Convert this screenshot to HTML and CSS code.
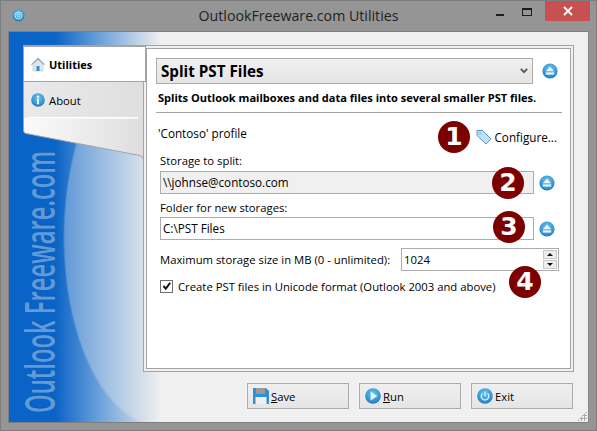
FILE: index.html
```html
<!DOCTYPE html>
<html lang="en">
<head>
<meta charset="utf-8">
<title>OutlookFreeware.com Utilities</title>
<link rel="stylesheet" href="styles.css">
</head>
<body>
<svg class="defs" width="0" height="0" aria-hidden="true">
  <defs>
    <radialGradient id="blue" cx="50%" cy="35%" r="70%">
      <stop offset="0" stop-color="#6cc4ee"/>
      <stop offset="0.6" stop-color="#3a9ad8"/>
      <stop offset="1" stop-color="#1a6fb8"/>
    </radialGradient>
    <symbol id="eject" viewBox="0 0 16 16">
      <circle cx="8" cy="8" r="7.6" fill="url(#blue)"/>
      <path d="M8 3.6 12.2 8.2H3.8Z" fill="#e8f4fb"/>
      <rect x="3.8" y="9.4" width="8.4" height="2.2" fill="#e8f4fb"/>
    </symbol>
  </defs>
</svg>
<div class="window">
  <header class="titlebar">
    <svg class="app-icon" viewBox="0 0 14 14"><circle cx="7" cy="7" r="6.5" fill="url(#blue)"/><circle cx="7" cy="7" r="3.8" fill="none" stroke="#cfe9f8" stroke-width="1"/><circle cx="7" cy="7" r="1.6" fill="none" stroke="#cfe9f8" stroke-width="1"/></svg>
    <h1 class="title">OutlookFreeware.com Utilities</h1>
    <div class="controls">
      <span class="min"></span>
      <span class="max"></span>
      <span class="close"><svg viewBox="0 0 10 10" width="10" height="10"><path d="M1 1 9 9M9 1 1 9" stroke="#fff" stroke-width="1.8"/></svg></span>
    </div>
  </header>
  <div class="client">
    <div class="watermark">Outlook Freeware.com</div>
    <div class="main">
      <nav class="nav">
        <svg class="nav-shape" viewBox="0 0 122 116" width="122" height="116">
          <defs><linearGradient id="pane" x1="0" x2="1" y1="0" y2="0"><stop offset="0" stop-color="#fbfbfb"/><stop offset="1" stop-color="#dedede"/></linearGradient></defs>
          <path d="M0.5 0.5V85.5Q0.5 88 3 88.5L117 110.5Q120.5 111.5 120.5 115V0.5Z" fill="url(#pane)" stroke="#a4a4a4"/>
        </svg>
        <a class="tab tab-active">
          <svg class="tab-icon" viewBox="0 0 16 16"><path d="M1 8.5 8 1.5l7 7-1 .6L8 3.4 2 9.1Z" fill="#8fa6b8"/><path d="M3 8.5 8 4l5 4.5V15H3Z" fill="#dfe7ee" stroke="#a8b4bf" stroke-width=".5"/><rect x="6.5" y="10" width="3" height="5" fill="#2f8fd6"/></svg>
          <span>Utilities</span>
        </a>
        <a class="tab tab-plain">
          <svg class="tab-icon" viewBox="0 0 16 16"><circle cx="8" cy="8" r="6.8" fill="url(#blue)"/><circle cx="8" cy="4.7" r="1.2" fill="#fff"/><rect x="7" y="6.8" width="2" height="5.4" fill="#fff"/></svg>
          <span>About</span>
        </a>
        <div class="nav-sep"></div>
      </nav>
      <section class="panel">
        <div class="panel-inner">
          <div class="row combo-row">
            <div class="combo">
              <span>Split PST Files</span>
              <svg class="chevron" viewBox="0 0 8 6" width="8" height="6"><path d="M.8 .8 4 4.2 7.2 .8" fill="none" stroke="#555" stroke-width="1.7"/></svg>
            </div>
            <svg class="eject"><use href="#eject"/></svg>
          </div>
          <p class="desc">Splits Outlook mailboxes and data files into several smaller PST files.</p>
          <div class="rule"></div>
          <div class="profile-row">
            <span>'Contoso' profile</span>
            <a class="configure">
              <svg class="tag" viewBox="0 0 16 16"><path d="M1 1.5H6.5L15 10 10 15 1 6.5Z" fill="#bfe0f6" stroke="#4f9ad2"/><circle cx="3.8" cy="4.2" r="1.1" fill="#fff" stroke="#4f9ad2" stroke-width=".6"/></svg>
              Configure...
            </a>
          </div>
          <label class="field-label first">Storage to split:</label>
          <div class="row field-row">
            <div class="input readonly">\\johnse@contoso.com</div>
            <svg class="eject"><use href="#eject"/></svg>
          </div>
          <label class="field-label second">Folder for new storages:</label>
          <div class="row field-row tight">
            <div class="input">C:\PST Files</div>
            <svg class="eject"><use href="#eject"/></svg>
          </div>
          <div class="size-row">
            <span class="size-label">Maximum storage size in MB (0 - unlimited):</span>
            <div class="spin">
              <span>1024</span>
              <div class="spin-btns">
                <i class="up"></i>
                <i class="down"></i>
              </div>
            </div>
          </div>
          <div class="check-row">
            <span class="checkbox"><svg viewBox="0 0 12 12" width="12" height="12"><path d="M2.5 6 5 8.8 9.6 2.6" fill="none" stroke="#111" stroke-width="2"/></svg></span>
            <span>Create PST files in Unicode format (Outlook 2003 and above)</span>
          </div>
          <span class="badge b1">1</span>
          <span class="badge b2">2</span>
          <span class="badge b3">3</span>
          <span class="badge b4">4</span>
        </div>
      </section>
    </div>
    <footer class="footer">
      <button class="btn">
        <svg viewBox="0 0 16 16"><path d="M0 0H13L16 3V16H0Z" fill="#2f8fd6"/><rect x="3" y="0" width="9" height="6" fill="#9a9a9a"/><rect x="2.5" y="9" width="11" height="7" fill="#eef1f3"/></svg>
        <span><u>S</u>ave</span>
      </button>
      <button class="btn">
        <svg viewBox="0 0 16 16"><circle cx="8" cy="8" r="7.8" fill="url(#blue)"/><path d="M5.6 3.6 12.4 8 5.6 12.4Z" fill="#e8f4fb"/></svg>
        <span><u>R</u>un</span>
      </button>
      <button class="btn">
        <svg viewBox="0 0 16 16"><circle cx="8" cy="8" r="7.8" fill="url(#blue)"/><path d="M5.4 5.4a3.8 3.8 0 1 0 5.2 0" fill="none" stroke="#e8f4fb" stroke-width="1.2"/><path d="M8 3.4V8" stroke="#e8f4fb" stroke-width="1.2"/></svg>
        <span>Exit</span>
      </button>
    </footer>
    <div class="grip"></div>
  </div>
</div>
</body>
</html>
```
FILE: styles.css
```css
* { box-sizing: border-box; }
html, body { margin: 0; padding: 0; }
body {
  width: 597px;
  height: 431px;
  overflow: hidden;
  font-family: "Open Sans", "Noto Sans", sans-serif;
  font-size: 11.3px;
  color: #000;
}
.defs { position: absolute; }
.window {
  width: 597px;
  height: 431px;
  display: flex;
  flex-direction: column;
  background: #959595;
  border: 1px solid #7d7d7d;
  padding: 0 7px 7px;
}
.titlebar {
  height: 30px;
  flex: none;
  display: flex;
  align-items: center;
  position: relative;
}
.app-icon { width: 13px; height: 13px; margin: 0 0 2px 4px; flex: none; }
.title {
  position: absolute;
  left: 0;
  right: 0;
  top: 5px;
  margin: 0;
  text-align: center;
  font-size: 14.2px;
  line-height: 20px;
  font-weight: 400;
  color: #222;
}
.controls {
  position: absolute;
  top: 0;
  right: -1px;
  display: flex;
  align-items: flex-start;
}
.min { width: 8px; height: 2px; background: #1c1c1c; margin: 13px 18px 0 0; }
.max { width: 10px; height: 8px; border: 1px solid #1c1c1c; border-top-width: 2px; margin: 7px 13px 0 0; }
.close {
  width: 45px;
  height: 20px;
  background: #c75050;
  display: flex;
  align-items: center;
  justify-content: center;
}
.client {
  flex: 1;
  position: relative;
  display: flex;
  flex-direction: column;
  border: 1px solid #7f7f7f;
  border-right-color: #888;
  background:
    radial-gradient(ellipse 96px 190px at 150px 205px, rgba(240,240,240,.32) 98%, rgba(240,240,240,0) 100%),
    linear-gradient(90deg, #0a63c6 0, #0a63c6 46px, #6aa0da 90px, #b7cde6 125px, #f0f0f0 152px);
  overflow: hidden;
}
.watermark {
  position: absolute;
  left: 12px;
  top: 381px;
  height: 36px;
  line-height: 36px;
  transform-origin: 0 0;
  transform: rotate(-90deg) scaleX(0.567);
  font-family: "Open Sans", sans-serif;
  font-size: 42px;
  font-weight: 600;
  white-space: nowrap;
  color: #5f9bdb;
  text-shadow: 1px 1px 1px #1a5aa8;
}
.main {
  display: flex;
  padding: 13px 0 0 14px;
  flex: none;
}
.nav {
  width: 122px;
  height: 116px;
  margin-right: -2px;
  position: relative;
  z-index: 1;
  padding-top: 1px;
}
.nav-shape { position: absolute; left: 0; top: 0; }
.tab {
  position: relative;
  display: flex;
  align-items: center;
  height: 36px;
  padding-left: 6px;
  gap: 3px;
}
.tab-icon { width: 16px; height: 16px; flex: none; }
.tab-active {
  margin-left: 1px;
  width: 122px;
  background: #fff;
  border-bottom: 1px solid #a4a4a4;
  border-right: 1px solid #a4a4a4;
  border-top: 1px solid #a4a4a4;
  font-weight: 700;
  font-size: 11px;
  color: #000;
}
.tab-plain {
  margin-left: 1px;
  width: 119px;
  background: linear-gradient(90deg, #e9e9e9, #dfdfdf);
}
.nav-sep { position: relative; height: 1px; background: #fff; margin: -1px 7px 0 5px; box-shadow: 0 1px 0 #f4f4f4; }
.panel {
  width: 431px;
  height: 327px;
  flex: none;
  border: 1px solid #a4a4a4;
  background: #f0f0f0;
  padding: 2px;
}
.panel-inner {
  position: relative;
  height: 100%;
  border: 1px solid #a4a4a4;
  background: #fff;
  padding: 9px 9px 0 9px;
}
.row { display: flex; align-items: center; }
.combo {
  width: 377px;
  height: 26px;
  display: flex;
  align-items: center;
  justify-content: space-between;
  padding: 0 4px 0 4px;
  border: 1px solid #acacac;
  background: linear-gradient(#f0f0f0, #e5e5e5);
  font-weight: 700;
  font-size: 15.2px;
  color: #000;
}
.eject { width: 16px; height: 16px; margin-left: 9px; flex: none; }
.desc { margin: 5px 0 0 2px; height: 17px; line-height: 17px; font-weight: 700; font-size: 11.05px; color: #000; white-space: nowrap; }
.rule { height: 1px; background: #a4a4a4; margin: 6px 0 0 0; width: 406px; }
.profile-row {
  display: flex;
  justify-content: space-between;
  align-items: center;
  height: 20px;
  margin: 10px 0 0 2px;
  width: 399px;
  font-size: 11.7px;
}
.configure { display: flex; align-items: center; gap: 2px; margin-top: 8px; }
.tag { width: 16px; height: 16px; }
.field-label { display: block; margin-left: 4px; height: 16px; line-height: 16px; }
.first { margin-top: 10px; }
.second { margin-top: 6px; }
.field-row { margin: 2px 0 0 4px; }
.tight { margin-top: 1px; }
.input {
  width: 374px;
  height: 23px;
  line-height: 21px;
  padding-left: 2px;
  border: 1px solid #acacac;
  background: #fff;
  font-size: 11.7px;
}
.readonly { background: #f0f0f0; }
.input + .eject { margin-left: 5px; }
.size-row {
  display: flex;
  align-items: center;
  margin: 8px 0 0 4px;
  height: 23px;
}
.size-label { width: 241px; flex: none; white-space: nowrap; }
.spin {
  width: 158px;
  height: 23px;
  border: 1px solid #acacac;
  display: flex;
  align-items: center;
  justify-content: space-between;
  padding: 0 1px 0 2px;
  flex: none;
}
.spin-btns { display: flex; flex-direction: column; gap: 1px; }
.spin-btns i {
  display: flex;
  align-items: center;
  justify-content: center;
  width: 14px;
  height: 9px;
  background: #ededed;
  border: 1px solid #c8c8c8;
}
.up::before { content: ""; border: 3px solid transparent; border-top: 0; border-bottom: 3px solid #111; }
.down::before { content: ""; border: 3px solid transparent; border-bottom: 0; border-top: 3px solid #111; }
.check-row { display: flex; align-items: center; margin: 7px 0 0 4px; height: 16px; gap: 5px; white-space: nowrap; }
.checkbox { width: 13px; height: 13px; border: 1px solid #707070; flex: none; display: flex; }
.checkbox svg { margin: -1px 0 0 -0.5px; }
.badge {
  position: absolute;
  width: 32px;
  height: 32px;
  border-radius: 50%;
  background: #7c0000;
  color: #fff;
  font-family: "DejaVu Sans", sans-serif;
  font-weight: 700;
  font-size: 25px;
  line-height: 32px;
  text-align: center;
}
.b1 { left: 291px; top: 72px; }
.b2 { left: 345px; top: 118px; }
.b3 { left: 346px; top: 162px; }
.b4 { left: 362px; top: 217px; }
.footer {
  flex: none;
  display: flex;
  justify-content: flex-end;
  gap: 10px;
  padding: 11px 15px 0 0;
}
.btn {
  width: 102px;
  height: 26px;
  display: flex;
  align-items: center;
  gap: 2px;
  padding: 0 0 0 5px;
  border: 1px solid #acacac;
  background: linear-gradient(#f0f0f0, #e5e5e5);
  font: inherit;
  color: #000;
}
.btn svg { width: 16px; height: 16px; flex: none; }
.grip {
  position: absolute;
  right: 1px;
  bottom: 1px;
  width: 10px;
  height: 10px;
  background-image: radial-gradient(circle, #a8a8a8 1px, transparent 1.1px);
  background-size: 3px 3px;
  clip-path: polygon(100% 0, 100% 100%, 0 100%);
}
```
